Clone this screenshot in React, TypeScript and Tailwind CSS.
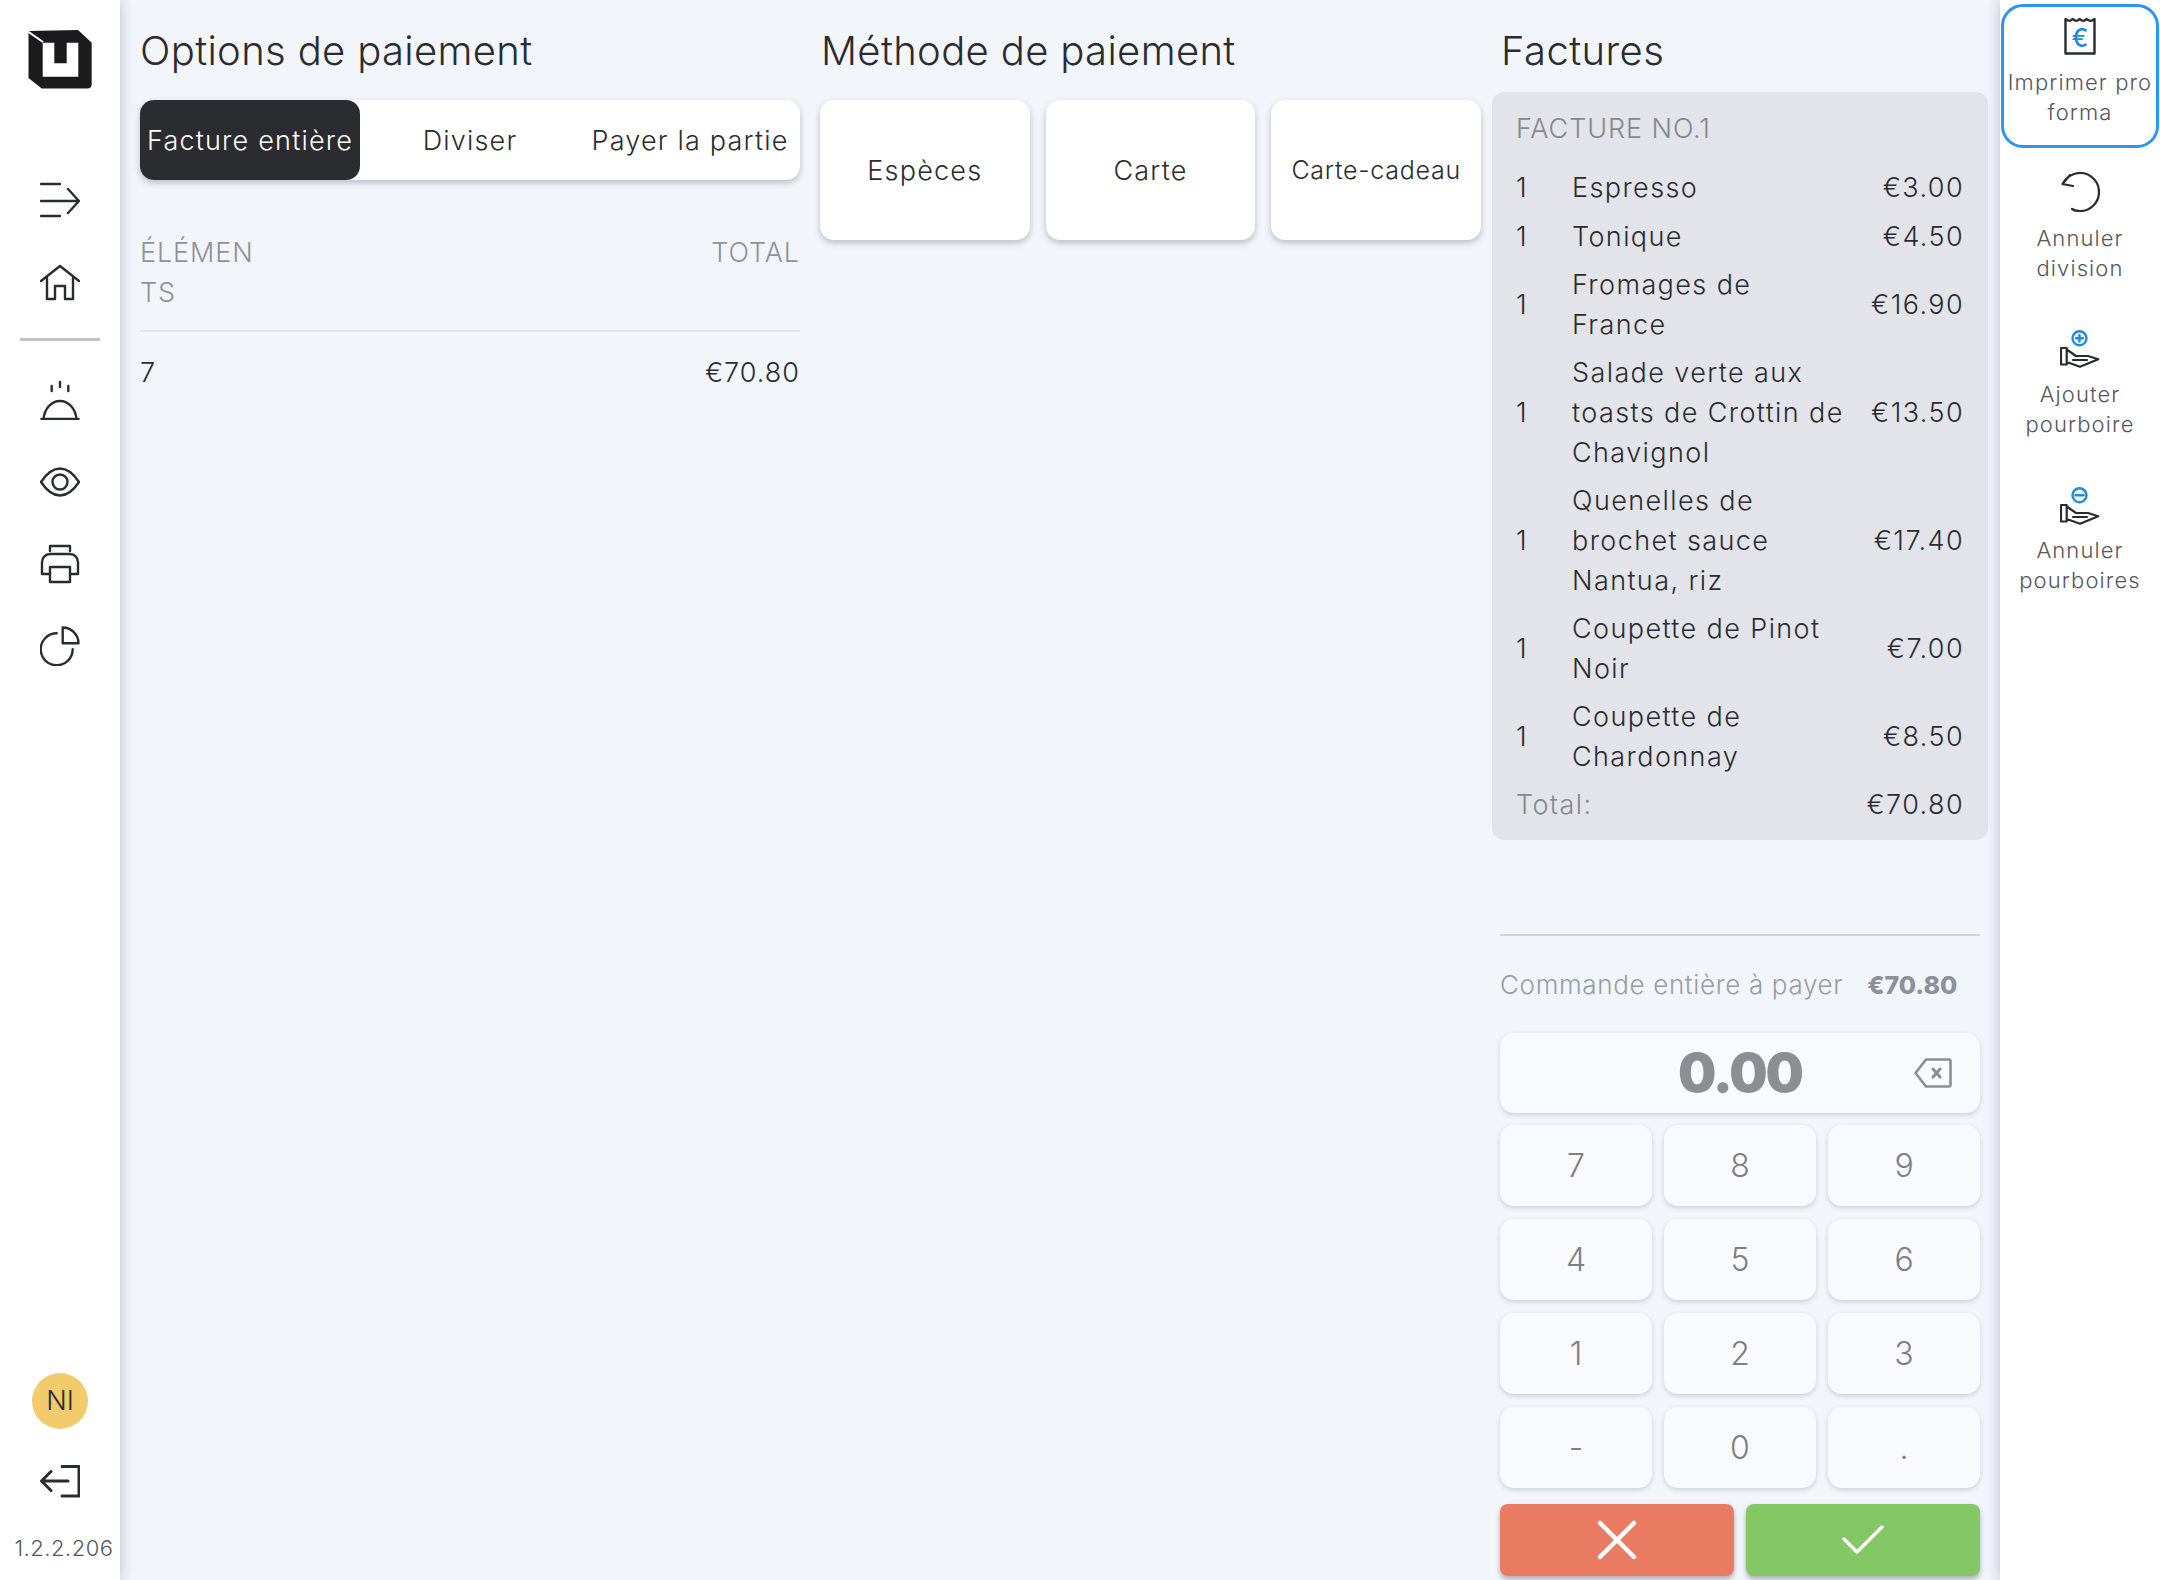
const font = "font-['Inter','Liberation_Sans',sans-serif]";

const invoiceLines = [
  { qty: 1, name: ["Espresso"], price: "€3.00" },
  { qty: 1, name: ["Tonique"], price: "€4.50" },
  { qty: 1, name: ["Fromages de", "France"], price: "€16.90" },
  { qty: 1, name: ["Salade verte aux", "toasts de Crottin de", "Chavignol"], price: "€13.50" },
  { qty: 1, name: ["Quenelles de", "brochet sauce", "Nantua, riz"], price: "€17.40" },
  { qty: 1, name: ["Coupette de Pinot", "Noir"], price: "€7.00" },
  { qty: 1, name: ["Coupette de", "Chardonnay"], price: "€8.50" },
];

const keys = ["7", "8", "9", "4", "5", "6", "1", "2", "3", "-", "0", "."];

function Logo() {
  return (
    <svg width="64" height="60" viewBox="0 0 64 60">
      <path
        fill="#1b1b1d"
        d="M0.5 1 L50 0 L63.7 12.7 L63.7 54 Q63.7 58.5 59 58.5 L13.7 58.5 L0.5 48 Z"
      />
      <path fill="#ffffff" d="M14.7 12.7H26.3V33.3H38.7V12.7H50.3V46.7H14.7Z" />
      <path stroke="#ffffff" strokeWidth="2" fill="none" d="M0 1.5 L15 12" />
    </svg>
  );
}

function NavIcon({ children, weight = 2.4 }: { children: React.ReactNode; weight?: number }) {
  return (
    <svg
      width="40"
      height="40"
      viewBox="0 0 40 40"
      fill="none"
      stroke="#2b2c30"
      strokeWidth={weight}
      strokeLinecap="round"
      strokeLinejoin="round"
    >
      {children}
    </svg>
  );
}

function Sidebar() {
  return (
    <aside className="w-[120px] h-full shrink-0 bg-white flex flex-col items-center relative z-10 shadow-[0_0_14px_rgba(100,110,130,0.4)]">
      <div className="mt-[30px] h-[60px]">
        <Logo />
      </div>
      <div className="mt-[90px] flex flex-col items-center gap-[42px]">
        <NavIcon>
          <path d="M1 4h19M1 21h38M1 36h19M28 9l11 12-11 12" />
        </NavIcon>
        <NavIcon>
          <path d="M1 19 20 4l19 15M7 16v21h8V24h10v13h8V16" />
        </NavIcon>
      </div>
      <div className="mt-[36px] w-[80px] h-[3px] bg-[#c2c2c4]" />
      <div className="mt-[39px] flex flex-col items-center gap-[42px]">
        <NavIcon>
          <path d="M1.5 39h37M3.5 39C4.5 29 11 21 20 21s15.500 8 16.500 18M20 2v5M11.700 6v5M28.300 6v5" />
        </NavIcon>
        <NavIcon>
          <path d="M1 20C7 11 13 6.500 20 6.500S33 11 39 20c-6 9-12 13.500-19 13.500S7 29 1 20Z" />
          <circle cx="20" cy="20" r="7.500" />
        </NavIcon>
        <NavIcon>
          <path d="M10 7V2h20v5M9 30H2V18a8 8 0 0 1 8-8h20a8 8 0 0 1 8 8v12h-7M10 23h20v15H10z" />
        </NavIcon>
        <NavIcon>
          <path d="M16.700 7.300A16 16 0 1 0 32.700 23.300M22.700 1.500V17.300H38.500A16 16 0 0 0 22.700 1.500Z" />
        </NavIcon>
      </div>
      <div className="mt-auto w-14 h-14 rounded-full bg-[#f2cb6c] flex items-center justify-center text-[27px] font-light text-[#2b2c30]">
        NI
      </div>
      <div className="mt-[32px] h-10">
        <NavIcon weight={3}>
          <path d="M22 5.500H39V35H22M1.500 20H28M11 10.500 1.500 20l9.500 9.500" />
        </NavIcon>
      </div>
      <div className="mt-[34px] mb-[18px] ml-[8px] text-[22px] leading-[27px] font-light tracking-[0.5px] text-[#55565a] whitespace-nowrap">
        1.2.2.206
      </div>
    </aside>
  );
}

function OptionsColumn() {
  return (
    <section className="w-[660px] shrink-0">
      <h2 className="text-[40px] leading-[48px] font-light text-[#2b2c30] tracking-[0.35px] mt-[27px]">
        Options de paiement
      </h2>
      <div className="mt-[25px] h-[80px] flex bg-white rounded-[14px] shadow-[0_3px_6px_rgba(60,64,80,0.3)] text-[27px] tracking-[1.2px] font-light text-[#2b2c30]">
        <div className="w-[220px] pt-[2px] rounded-[14px] bg-[#2b2c30] text-white flex items-center justify-center whitespace-nowrap">
          Facture entière
        </div>
        <div className="w-[220px] pt-[2px] flex items-center justify-center">Diviser</div>
        <div className="w-[220px] pt-[2px] flex items-center justify-center whitespace-nowrap">Payer la partie</div>
      </div>
      <div className="mt-[53px] pb-[17px] flex justify-between border-b-2 border-[#e4e6ea] text-[27px] leading-[40px] font-light tracking-[0.9px] text-[#8f9298]">
        <span className="w-[120px] break-all">ÉLÉMENTS</span>
        <span>TOTAL</span>
      </div>
      <div className="mt-[21px] flex justify-between text-[27px] leading-[40px] font-light tracking-[1px] text-[#2b2c30]">
        <span>7</span>
        <span>€70.80</span>
      </div>
    </section>
  );
}

function MethodColumn() {
  return (
    <section className="w-[660px] shrink-0 ml-[21px]">
      <h2 className="text-[40px] leading-[48px] font-light text-[#2b2c30] tracking-[0.35px] mt-[27px]">
        Méthode de paiement
      </h2>
      <div className="mt-[25px] -ml-px grid grid-cols-3 gap-[16px]">
        {["Espèces", "Carte", "Carte-cadeau"].map((label) => (
          <div
            key={label}
            className="h-[140px] pt-[2px] rounded-[14px] bg-white shadow-[0_3px_6px_rgba(60,64,80,0.3)] flex items-center justify-center text-[27px] font-light tracking-[1.2px] text-[#2b2c30] whitespace-nowrap last:text-[25px] last:tracking-[0.75px]"
          >
            {label}
          </div>
        ))}
      </div>
    </section>
  );
}

function InvoiceColumn() {
  return (
    <section className="flex-1 ml-[11px] mr-[12px] flex flex-col h-full">
      <h2 className="text-[40px] leading-[48px] font-light text-[#2b2c30] tracking-[0.4px] mt-[27px] ml-[9px]">
        Factures
      </h2>
      <div className="mt-[17px] rounded-[12px] bg-[#e2e4e9] px-[24px] pt-[17px] pb-[15px] text-[27px] font-light tracking-[1.4px] text-[#2b2c30]">
        <div className="leading-[40px] tracking-[0.9px] text-[#85888e] mb-[15px]">FACTURE NO.1</div>
        {invoiceLines.map((line, i) => (
          <div key={i} className="flex items-center py-[4px]">
            <span className="w-[56px] shrink-0">{line.qty}</span>
            <span className="flex-1 leading-[40px]">
              {line.name.map((part) => (
                <div key={part} className="whitespace-nowrap">
                  {part}
                </div>
              ))}
            </span>
            <span>{line.price}</span>
          </div>
        ))}
        <div className="flex justify-between leading-[40px] mt-[4px]">
          <span className="text-[#85888e]">Total:</span>
          <span>€70.80</span>
        </div>
      </div>
      <div className="mt-[94px] mx-[8px] h-[2px] bg-[#d2d5db]" />
      <div className="mx-[8px] mt-[29px] flex items-center text-[26px] leading-[40px] font-light tracking-[0.65px] text-[#9a9da3]">
        <span>Commande entière à payer</span>
        <span className="ml-[24px] font-extrabold text-[25px] tracking-normal text-[#8e9199]">€70.80</span>
      </div>
      <div className="mx-[8px] mt-[28px] h-[80px] pb-[1px] relative rounded-[14px] bg-[#f9fafe] shadow-[0_2px_5px_rgba(60,64,80,0.2)] flex items-center justify-center text-[54px] font-black tracking-[-2px] text-[#8c8e93]">
        0.00
        <svg className="absolute right-[28px] top-[25px]" width="38" height="30" viewBox="0 0 38 30" fill="none" stroke="#8c8e93" strokeWidth="2.6" strokeLinejoin="round" strokeLinecap="round">
          <path d="M12 1.500h23a1.500 1.500 0 0 1 1.500 1.500v24a1.500 1.500 0 0 1-1.500 1.500H12L1.500 15Z" />
          <path d="M19 11l7 8M26 11l-7 8" strokeWidth="3" />
        </svg>
      </div>
      <div className="mx-[8px] mt-[12px] grid grid-cols-3 gap-x-[12px] gap-y-[13px]">
        {keys.map((k) => (
          <div
            key={k}
            className="h-[81px] pt-[1px] rounded-[14px] bg-[#f9fafe] shadow-[0_2px_5px_rgba(60,64,80,0.2)] flex items-center justify-center text-[32px] font-light text-[#7d7f84]"
          >
            {k}
          </div>
        ))}
      </div>
      <div className="mx-[8px] mt-[16px] grid grid-cols-2 gap-[12px]">
        <div className="h-[72px] rounded-[8px] bg-[#e97b63] shadow-[0_3px_5px_rgba(60,64,80,0.4)] flex items-center justify-center">
          <svg width="40" height="40" viewBox="0 0 40 40" stroke="#fff" strokeWidth="4.500" strokeLinecap="round">
            <path d="M3 3l34 34M37 3 3 37" />
          </svg>
        </div>
        <div className="h-[72px] rounded-[8px] bg-[#84c765] shadow-[0_3px_5px_rgba(60,64,80,0.4)] flex items-center justify-center">
          <svg width="42" height="30" viewBox="0 0 42 30" fill="none" stroke="#fff" strokeWidth="3.400" strokeLinecap="round" strokeLinejoin="round">
            <path d="M2 14l13 13L40 2" />
          </svg>
        </div>
      </div>
    </section>
  );
}

function HandIcon({ minus }: { minus?: boolean }) {
  return (
    <svg width="40" height="38" viewBox="0 0 40 38" fill="none" strokeLinecap="round" strokeLinejoin="round">
      <circle cx="19.500" cy="8.300" r="7" stroke="#1e88e5" strokeWidth="2.400" />
      <path d={minus ? "M15.500 8.300h8" : "M16 8.300h7M19.500 5v6.600"} stroke="#1e88e5" strokeWidth="2.400" />
      <path
        d="M1 18h5.700v16.500H1zM6.700 19.500 16 26h12l10.300 3.300L20 36.700 6.700 32M13 30h14"
        stroke="#2b2c30"
        strokeWidth="2.200"
      />
    </svg>
  );
}

function ActionsBar() {
  const labelClass =
    "text-[22px] leading-[30px] font-light tracking-[1.1px] text-[#55565a] text-center whitespace-nowrap";
  return (
    <aside className="w-[160px] h-full shrink-0 bg-white relative z-10 shadow-[0_0_14px_rgba(100,110,130,0.4)] flex flex-col items-center">
      <div className="mt-[4px] w-[158px] h-[144px] rounded-[22px] border-[3px] border-[#2f94f0] flex flex-col items-center pt-[10px]">
        <svg width="32" height="38" viewBox="0 0 32 38" fill="none">
          <path d="M1.500 2c3.500 2.500 4.700 2.500 7 0 3.500 2.500 4.700 2.500 7 0 3.500 2.500 4.700 2.500 7 0 3.500 2.500 4.700 2.500 8 0v34.500h-29Z" stroke="#2b2c30" strokeWidth="2.400" strokeLinejoin="round" />
          <text x="16" y="30" textAnchor="middle" fontSize="25" fontWeight="500" fill="#1e88e5" fontFamily="Inter">€</text>
        </svg>
        <div className={`${labelClass} mt-[12px]`}>Imprimer pro</div>
        <div className={labelClass}>forma</div>
      </div>
      <div className="mt-[24px] flex flex-col items-center">
        <svg width="40" height="40" viewBox="0 0 40 40" fill="none" stroke="#2b2c30" strokeWidth="2.200" strokeLinecap="round" strokeLinejoin="round">
          <path d="M2.500 12C6 5 13 1 20 1a19 19 0 0 1 0 38c-3 0-6-.5-8-2M2.500 12 10 3M2.500 12 13 14" />
        </svg>
        <div className={`${labelClass} mt-[11px]`}>Annuler</div>
        <div className={labelClass}>division</div>
      </div>
      <div className="mt-[47px] flex flex-col items-center">
        <HandIcon />
        <div className={`${labelClass} mt-[11px]`}>Ajouter</div>
        <div className={labelClass}>pourboire</div>
      </div>
      <div className="mt-[48px] flex flex-col items-center">
        <HandIcon minus />
        <div className={`${labelClass} mt-[10px]`}>Annuler</div>
        <div className={labelClass}>pourboires</div>
      </div>
    </aside>
  );
}

export default function App() {
  return (
    <div className={`${font} w-[2160px] h-[1580px] flex overflow-hidden bg-[#f2f5fa]`}>
      <Sidebar />
      <main className="flex-1 min-w-0 flex pl-[20px]">
        <OptionsColumn />
        <MethodColumn />
        <InvoiceColumn />
      </main>
      <ActionsBar />
    </div>
  );
}
